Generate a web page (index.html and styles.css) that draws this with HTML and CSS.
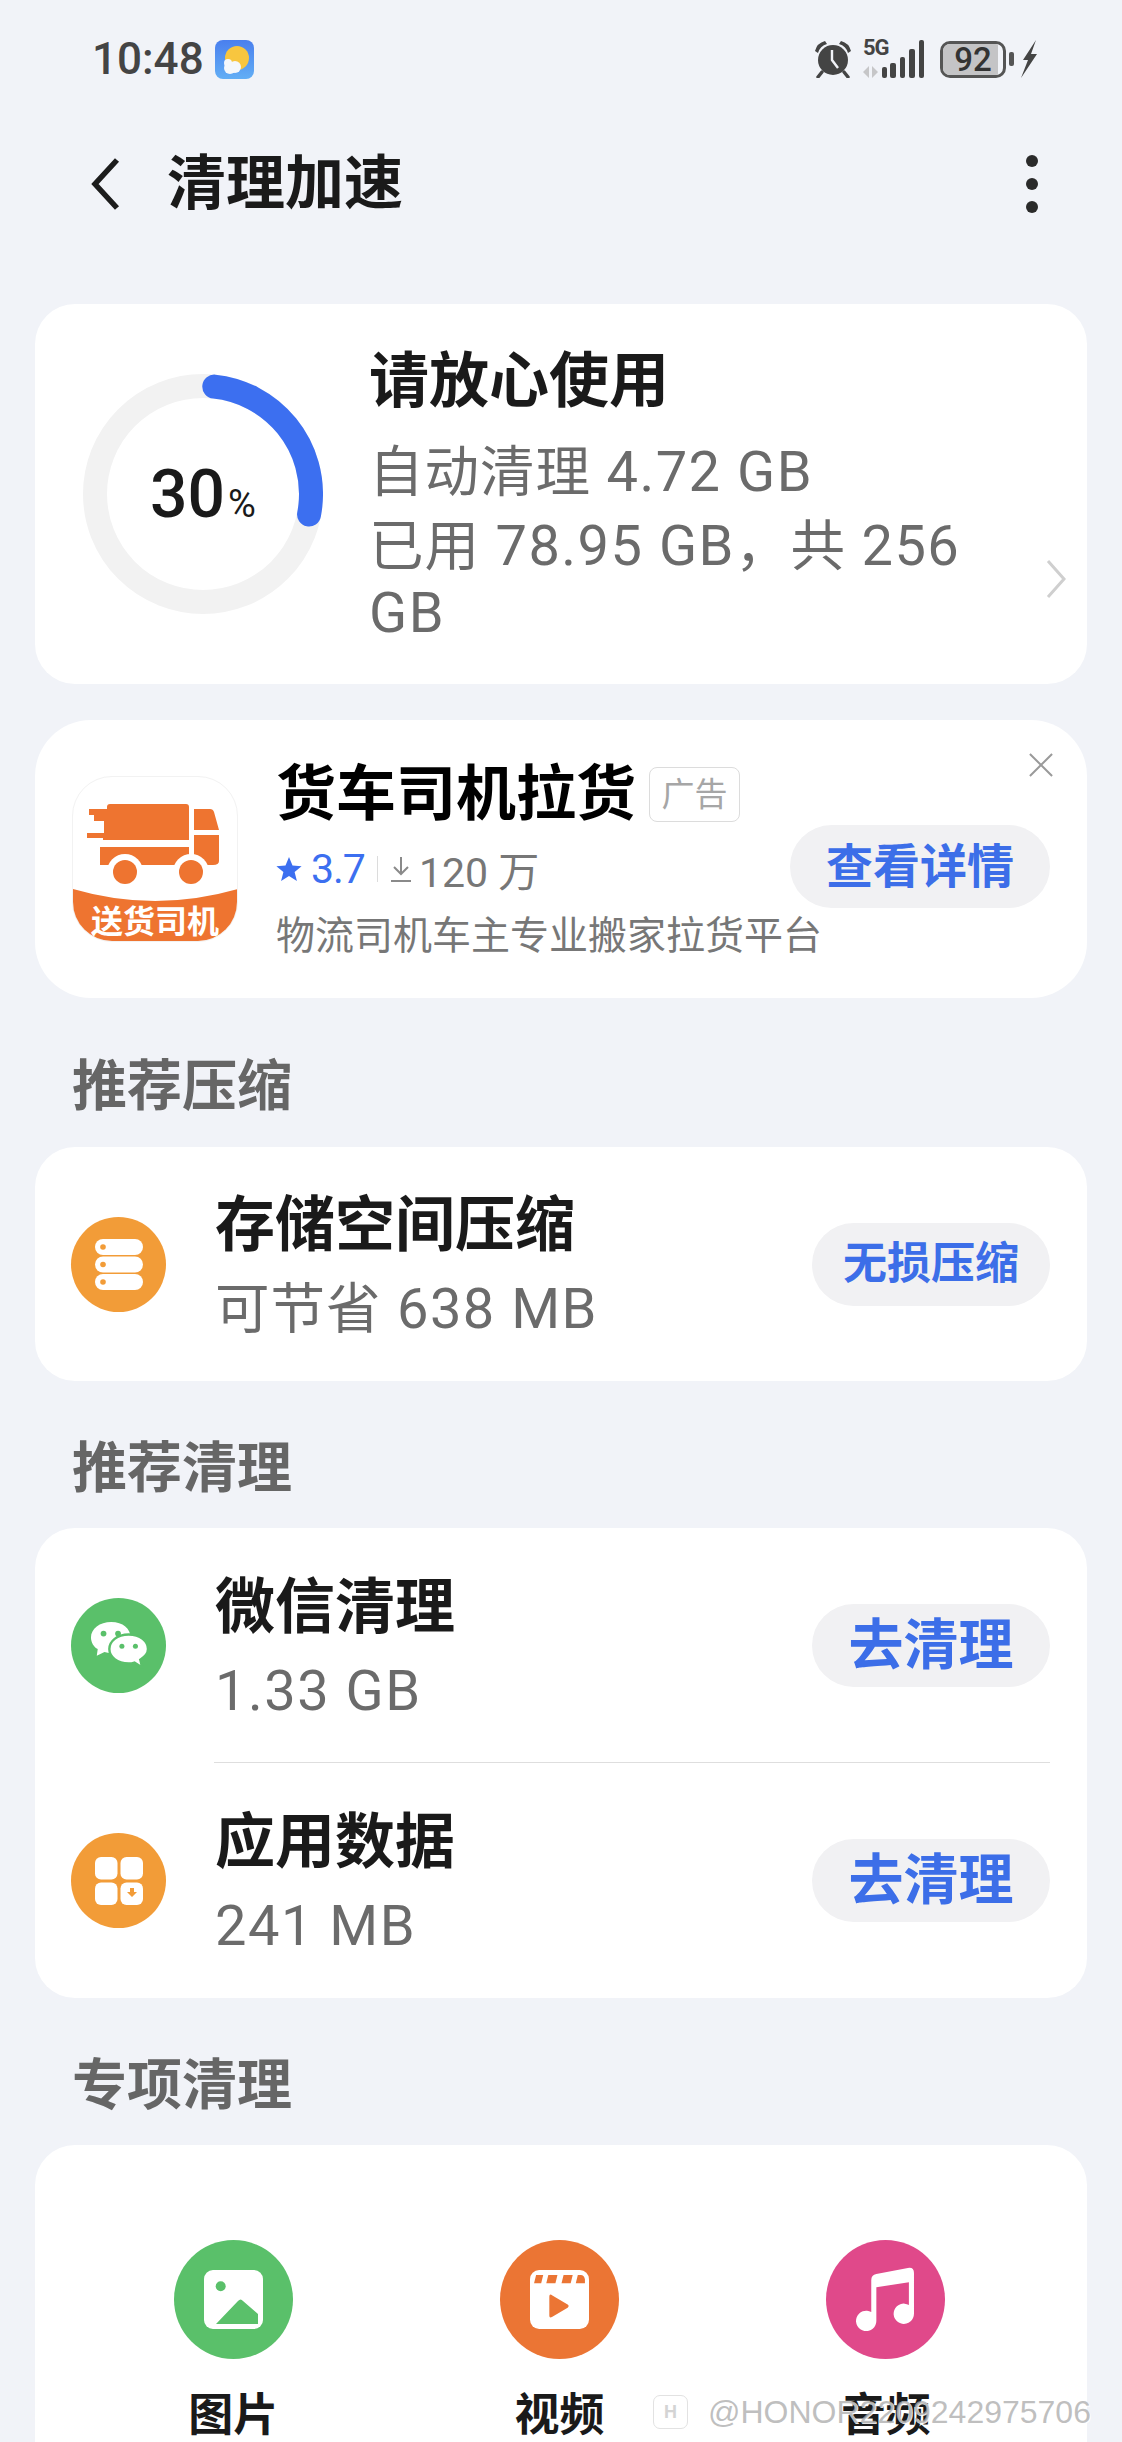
FILE: index.html
```html
<!DOCTYPE html>
<html lang="zh-CN">
<head>
  <meta charset="UTF-8" />
  <meta name="viewport" content="width=device-width, initial-scale=1.0" />
  <title>清理加速</title>
  <link rel="stylesheet" href="styles.css">
</head>
<body>
  <div id="screen">
    <div class="status">
      <div class="status-left">
        <span class="time">10:48</span>
        <svg class="weather" viewBox="0 0 39 39">
          <defs>
            <linearGradient id="sky" x1="0" y1="0" x2="0" y2="1">
              <stop offset="0" stop-color="#4a7fee"/>
              <stop offset="1" stop-color="#62aef5"/>
            </linearGradient>
          </defs>
          <rect width="39" height="39" rx="8" fill="url(#sky)"/>
          <circle cx="22" cy="18" r="12" fill="#f8c63f"/>
          <circle cx="15" cy="28" r="6" fill="#f4f7fb"/>
          <circle cx="20" cy="27" r="6" fill="#f4f7fb"/>
          <circle cx="13" cy="23" r="4" fill="#f4f7fb"/>
        </svg>
      </div>
      <div class="status-right">
        <svg class="st-alarm" viewBox="0 0 38 38">
          <path d="M1 11 Q3 3 11 1 L13 4 Q6 6 4 13Z M37 11 Q35 3 27 1 L25 4 Q32 6 34 13Z" fill="#444"/>
          <circle cx="19" cy="20" r="15" fill="#444"/>
          <path d="M18 10 V20 L24 28" stroke="#f1f3f8" stroke-width="2.4" fill="none"/>
          <path d="M8 32 L4 37 M30 32 L34 37" stroke="#444" stroke-width="3.4" stroke-linecap="round"/>
        </svg>
        <div class="st-net">
          <span class="st-5g">5G</span>
          <svg class="st-bars" viewBox="0 0 62 38">
            <path d="M6 26 L0 32 L6 38Z M9 26 V38 L15 32Z" fill="#c6c6c8"/>
            <rect x="19" y="27" width="5" height="11" rx="2" fill="#444"/>
            <rect x="27" y="23" width="6" height="15" rx="2" fill="#444"/>
            <rect x="37" y="17" width="5" height="21" rx="2" fill="#444"/>
            <rect x="46" y="9" width="6" height="29" rx="2" fill="#444"/>
            <rect x="56" y="0" width="5" height="38" rx="2" fill="#444"/>
          </svg>
        </div>
        <div class="st-battery">
          <div class="st-fill"></div>
          <span class="st-level">92</span>
        </div>
        <span class="st-nub"></span>
        <svg class="st-bolt" viewBox="0 0 16 38">
          <path d="M15 0 L2 20 L7 20 L0 38 L16 14 L10 14Z" fill="#444"/>
        </svg>
      </div>
    </div>

    <div class="topbar">
      <svg class="back" viewBox="0 0 30 54">
        <path d="M26 3 L4 27 L26 51" fill="none" stroke="#1c1c1c" stroke-width="5.5"/>
      </svg>
      <h1>清理加速</h1>
      <div class="more"><i></i><i></i><i></i></div>
    </div>

    <div class="card summary">
      <div class="ring">
        <svg viewBox="0 0 240 240">
          <circle cx="120" cy="120" r="108" fill="none" stroke="#f2f2f2" stroke-width="24"/>
          <circle class="ring-val" cx="120" cy="120" r="108" fill="none" pathLength="360" stroke-dasharray="95 360" stroke-linecap="round" stroke="#3c6ff0" stroke-width="24"/>
        </svg>
        <div class="ring-text">30<small>%</small></div>
      </div>
      <div class="summary-text">
        <div class="summary-title">请放心使用</div>
        <div class="summary-line"><span class="cn">自动清理</span> 4.72 GB</div>
        <div class="summary-line"><span class="cn">已用</span> 78.95 GB<span class="cn">，共</span> 256<br>GB</div>
      </div>
      <svg class="chevron" viewBox="0 0 20 38">
        <path d="M2 1 L18 19 L2 37" fill="none" stroke="#cfcfcf" stroke-width="3"/>
      </svg>
    </div>

    <div class="card ad">
      <svg class="ad-close" viewBox="0 0 26 26">
        <path d="M1 1 L25 25 M25 1 L1 25" stroke="#9a9a9a" stroke-width="2.2"/>
      </svg>
      <div class="app-icon">
        <svg viewBox="0 0 165 165">
          <path d="M0 112 Q82 136 165 112 V165 H0Z" fill="#ee7430"/>
          <path d="M34 30 Q34 27 37 27 H113 Q116 27 116 30 V63 H30 V61 H14 V56 H31 V44 H21 V38 H34 V38 H16 V32 H34Z" fill="#ee7430"/>
          <path d="M27 70 H116 V88 H27 Q27 80 27 70Z" fill="#ee7430"/>
          <path d="M121 32 H137 Q140 32 141 35 L146 53 H121Z M121 58 H146 V84 Q146 88 140 88 H121Z" fill="#ee7430"/>
          <circle cx="52" cy="95" r="18" fill="#fff"/>
          <circle cx="118" cy="95" r="18" fill="#fff"/>
          <circle cx="52" cy="95" r="12" fill="#ee7430"/>
          <circle cx="118" cy="95" r="12" fill="#ee7430"/>
        </svg>
        <div class="app-band">送货司机</div>
      </div>
      <div class="ad-body">
        <div class="ad-title">
          <span>货车司机拉货</span>
          <span class="ad-tag">广告</span>
        </div>
        <div class="ad-meta">
          <svg class="star" viewBox="0 0 26 26">
            <path d="M13 1 L16.5 9.6 L25.6 10.2 L18.6 16 L20.9 25 L13 20.1 L5.1 25 L7.4 16 L.4 10.2 L9.5 9.6Z" fill="#3c6ff0"/>
          </svg>
          <span class="rate">3.7</span>
          <span class="meta-sep"></span>
          <svg class="dl" viewBox="0 0 22 26">
            <path d="M11 1 V18 M4 11 L11 18 L18 11 M1 25 H21" fill="none" stroke="#8a8a8a" stroke-width="2"/>
          </svg>
          <span class="dl-count">120 万</span>
        </div>
        <div class="ad-desc">物流司机车主专业搬家拉货平台</div>
      </div>
      <div class="pill pill-ad">查看详情</div>
    </div>

    <h2 class="section section-first">推荐压缩</h2>
    <div class="card single">
      <div class="row">
        <div class="row-icon orange">
          <svg viewBox="0 0 48 51">
            <rect x="0" y="0" width="48" height="16" rx="8" fill="#fff"/>
            <rect x="0" y="17.5" width="48" height="16" rx="8" fill="#fff"/>
            <rect x="0" y="35" width="48" height="16" rx="8" fill="#fff"/>
            <circle cx="8" cy="8" r="2.8" fill="#f29c38"/>
            <circle cx="8" cy="25.5" r="2.8" fill="#f29c38"/>
            <circle cx="8" cy="43" r="2.8" fill="#f29c38"/>
          </svg>
        </div>
        <div class="row-text">
          <div class="row-title">存储空间压缩</div>
          <div class="row-sub"><span class="cn">可节省</span> 638 MB</div>
        </div>
        <div class="pill pill-small">无损压缩</div>
      </div>
    </div>

    <h2 class="section">推荐清理</h2>
    <div class="card">
      <div class="row">
        <div class="row-icon green">
          <svg viewBox="0 0 60 48">
            <path d="M22 0 C10 0 1 7 1 16 C1 21 4 26 8 28 L7 35 L15 31 Q18 32 22 32 C34 32 42 25 42 16 C42 7 34 0 22 0Z" fill="#fff"/>
            <circle cx="14" cy="12" r="3" fill="#5ac06a"/>
            <circle cx="29" cy="12" r="3" fill="#5ac06a"/>
            <path d="M40 13 C28 13 20 20 20 28 C20 36 28 43 40 43 Q43 43 46 42 L54 47 L52 39 C57 36 60 32 60 28 C60 20 52 13 40 13Z" fill="#fff" stroke="#5ac06a" stroke-width="2.5"/>
            <circle cx="33" cy="25" r="2.6" fill="#5ac06a"/>
            <circle cx="47" cy="25" r="2.6" fill="#5ac06a"/>
          </svg>
        </div>
        <div class="row-text">
          <div class="row-title">微信清理</div>
          <div class="row-sub">1.33 GB</div>
        </div>
        <div class="pill">去清理</div>
      </div>
      <div class="row-line"></div>
      <div class="row">
        <div class="row-icon orange">
          <svg viewBox="0 0 48 48">
            <rect x="0" y="0" width="22.5" height="22.5" rx="6" fill="#fff"/>
            <rect x="25.5" y="0" width="22.5" height="22.5" rx="6" fill="#fff"/>
            <rect x="0" y="25.5" width="22.5" height="22.5" rx="6" fill="#fff"/>
            <rect x="25.5" y="25.5" width="22.5" height="22.5" rx="6" fill="#fff"/>
            <path d="M35 31 H39 V35 H42 L37 40 L32 35 H35Z" fill="#f29c38"/>
          </svg>
        </div>
        <div class="row-text">
          <div class="row-title">应用数据</div>
          <div class="row-sub">241 MB</div>
        </div>
        <div class="pill">去清理</div>
      </div>
    </div>

    <h2 class="section">专项清理</h2>
    <div class="card special">
      <div class="tile">
        <div class="tile-icon green">
          <svg viewBox="0 0 59 59">
            <rect width="59" height="59" rx="9" fill="#fff"/>
            <circle cx="16.7" cy="16.3" r="5" fill="#5ac06a"/>
            <path d="M12 54 L34 31 Q36.7 28 39 31 L54 44 V54Z" fill="#5ac06a"/>
          </svg>
        </div>
        <div class="tile-label">图片</div>
      </div>
      <div class="tile">
        <div class="tile-icon video">
          <svg viewBox="0 0 58 58">
            <rect width="58" height="58" rx="9" fill="#fff"/>
            <path d="M6 5 H13 L11 13 H4Z M18 5 H27 L25 13 H16Z M33 5 H42 L40 13 H31Z M47 5 H50 Q53 5 54 9 V13 H45Z" fill="#eb7534"/>
            <path d="M19 26 Q19 23 22 25 L37 34 Q39 35.500 37 37 L22 46 Q19 48 19 45Z" fill="#eb7534"/>
          </svg>
        </div>
        <div class="tile-label">视频</div>
      </div>
      <div class="tile">
        <div class="tile-icon pink">
          <svg viewBox="0 0 58 64">
            <path d="M15 13 Q15 8 20 7 L51 1 Q57 0 57 6 V46 A10 10 0 1 1 52 37.340 V15 L20 20 V53 A10 10 0 1 1 15 44.340Z" fill="#fff"/>
          </svg>
        </div>
        <div class="tile-label">音频</div>
      </div>
    </div>

    <div class="watermark">
      <span class="wm-logo">H</span>
      <span class="wm-text">@HONOR2209242975706</span>
    </div>
  </div>
</body>
</html>
```

FILE: styles.css
```css
* {
  box-sizing: border-box;
}
html, body {
  margin: 0;
  height: 2442px;
  overflow: hidden;
}
body {
  background-color: #f1f3f8;
  color: #1a1a1a;
  font-family: "Roboto", "Noto Sans CJK SC", sans-serif;
}
#screen {
  position: relative;
  height: 2442px;
  padding: 39px 35px 0;
  overflow: hidden;
}
.cn {
  font-size: 54.5px;
  letter-spacing: 1px;
}

/* status bar */
.status {
  height: 40px;
  padding: 0 50px 0 57px;
  display: flex;
  align-items: center;
  justify-content: space-between;
}
.status-left {
  display: flex;
  align-items: center;
  gap: 11px;
}
.time {
  font-size: 44px;
  font-weight: 500;
  color: #444;
}
.weather {
  width: 39px;
  height: 39px;
}
.status-right {
  display: flex;
  align-items: center;
}
.st-alarm {
  width: 38px;
  height: 38px;
}
.st-net {
  position: relative;
  width: 62px;
  height: 38px;
  margin-left: 11px;
}
.st-5g {
  position: absolute;
  left: 0;
  top: -5px;
  font-size: 22px;
  line-height: 26px;
  font-weight: 700;
  letter-spacing: -1px;
  color: #444;
}
.st-bars {
  width: 62px;
  height: 38px;
  display: block;
}
.st-battery {
  position: relative;
  width: 66px;
  height: 37px;
  margin-left: 15px;
  border: 3px solid #555;
  border-radius: 10px;
  overflow: hidden;
  display: flex;
  align-items: center;
  justify-content: center;
}
.st-fill {
  position: absolute;
  left: 0;
  top: 0;
  bottom: 0;
  width: 92%;
  background-color: #c4c4c6;
}
.st-level {
  position: relative;
  font-size: 33px;
  font-weight: 500;
  color: #333;
  line-height: 1;
}
.st-nub {
  width: 5px;
  height: 14px;
  margin-left: 3px;
  background-color: #555;
  border-radius: 2px;
}
.st-bolt {
  width: 16px;
  height: 38px;
  margin-left: 7px;
}

/* title bar */
.topbar {
  display: flex;
  align-items: center;
  height: 80px;
  margin-top: 65px;
  padding: 0 49px 0 56px;
}
.back {
  width: 30px;
  height: 54px;
  margin-right: 46px;
}
.topbar h1 {
  margin: 0;
  flex: 1;
  font-size: 59px;
  line-height: 80px;
  font-weight: 700;
  color: #1a1a1a;
}
.more {
  display: flex;
  flex-direction: column;
  gap: 11px;
}
.more i {
  display: block;
  width: 12px;
  height: 12px;
  border-radius: 50%;
  background-color: #2a2a2a;
}

/* cards */
.card {
  background-color: #fff;
  border-radius: 40px;
}
.summary {
  position: relative;
  height: 380px;
  margin-top: 80px;
  padding: 70px 0 0 48px;
  display: flex;
}
.ring {
  position: relative;
  width: 240px;
  height: 240px;
  flex: none;
}
.ring svg {
  display: block;
  width: 240px;
  height: 240px;
}
.ring-val {
  transform: rotate(-84deg);
  transform-origin: 120px 120px;
}
.ring-text {
  position: absolute;
  inset: 0;
  display: flex;
  align-items: baseline;
  justify-content: center;
  padding-top: 81px;
  font-size: 66px;
  line-height: 80px;
  font-weight: 500;
}
.ring-text small {
  font-size: 38px;
  font-weight: 400;
  margin-left: 3px;
}
.summary-text {
  margin: -34px 0 0 46px;
  width: 640px;
}
.summary-title {
  font-size: 60px;
  line-height: 84px;
  font-weight: 700;
  margin-bottom: 15px;
}
.summary-line {
  font-size: 56px;
  line-height: 67px;
  letter-spacing: 1.5px;
  color: #6b6b6b;
  margin-bottom: 7px;
}
.chevron {
  position: absolute;
  right: 21px;
  top: 256px;
  width: 20px;
  height: 38px;
}

.ad {
  position: relative;
  height: 278px;
  margin-top: 36px;
  border-radius: 56px;
  padding: 0 37px;
  display: flex;
  align-items: center;
}
.ad-close {
  position: absolute;
  right: 34px;
  top: 33px;
  width: 24px;
  height: 24px;
}
.app-icon {
  position: relative;
  width: 166px;
  height: 166px;
  flex: none;
  border: 1px solid #f2f2f2;
  border-radius: 40px;
  overflow: hidden;
  margin-top: -1px;
}
.app-icon svg {
  display: block;
  width: 165px;
  height: 165px;
}
.app-band {
  position: absolute;
  left: 0;
  right: 0;
  bottom: 3px;
  color: #fff;
  font-size: 32px;
  line-height: 32px;
  font-weight: 700;
  text-align: center;
}
.ad-body {
  flex: 1;
  margin-left: 38px;
}
.ad-title {
  display: flex;
  align-items: center;
  gap: 13px;
  font-size: 60px;
  line-height: 80px;
  font-weight: 700;
  color: #000;
}
.ad-tag {
  width: 91px;
  height: 55px;
  border: 1px solid #dcdcdc;
  border-radius: 8px;
  font-size: 33px;
  line-height: 53px;
  font-weight: 400;
  text-align: center;
  color: #a6a6a6;
}
.ad-meta {
  display: flex;
  align-items: center;
  height: 56px;
  margin-top: 6px;
  font-size: 41px;
}
.star {
  width: 26px;
  height: 26px;
  margin-right: 9px;
}
.rate {
  color: #3c6ff0;
  letter-spacing: -1px;
}
.meta-sep {
  width: 1px;
  height: 26px;
  margin: 0 12px;
  background-color: #dcdcdc;
}
.dl {
  width: 22px;
  height: 26px;
  margin-right: 7px;
}
.dl-count {
  color: #777;
}
.ad-desc {
  margin-top: 11px;
  font-size: 39px;
  line-height: 56px;
  color: #777;
}
.pill {
  flex: none;
  width: 238px;
  height: 83px;
  border-radius: 42px;
  background-color: #f1f1f3;
  color: #3c6ee8;
  font-size: 55px;
  line-height: 83px;
  font-weight: 700;
  text-align: center;
}
.pill-small {
  font-size: 44px;
}
.pill-ad {
  position: absolute;
  right: 37px;
  top: 105px;
  width: 260px;
  font-size: 47px;
}

/* list rows */
.section {
  margin: 0;
  height: 147px;
  padding: 0 37px;
  font-size: 55px;
  line-height: 174px;
  font-weight: 700;
  color: #666;
}
.section-first {
  height: 149px;
  line-height: 176px;
}
.row {
  height: 235px;
  padding: 0 37px 0 36px;
  display: flex;
  align-items: center;
}
.single .row {
  height: 234px;
}
.row-icon {
  width: 95px;
  height: 95px;
  flex: none;
  border-radius: 50%;
  display: flex;
  align-items: center;
  justify-content: center;
}
.row-icon svg {
  width: 48px;
}
.row-icon.orange {
  background-color: #f29c38;
}
.row-icon.green {
  background-color: #5ac06a;
}
.row-icon.green svg {
  width: 58px;
}
.row-text {
  flex: 1;
  margin-left: 49px;
  padding-top: 6px;
}
.row-title {
  font-size: 60px;
  line-height: 84px;
  font-weight: 700;
}
.row-sub {
  font-size: 56px;
  line-height: 82px;
  letter-spacing: 1.5px;
  color: #6b6b6b;
}
.row-line {
  height: 1px;
  margin: -1px 37px 0 179px;
  background-color: #dedede;
}

/* special tiles */
.special {
  padding: 95px 38px 0 35px;
  display: grid;
  grid-template-columns: repeat(3, 1fr);
  height: 400px;
}
.tile {
  display: flex;
  flex-direction: column;
  align-items: center;
}
.tile-icon {
  width: 119px;
  height: 119px;
  border-radius: 50%;
  display: flex;
  align-items: center;
  justify-content: center;
}
.tile-icon svg {
  width: 59px;
}
.tile-icon.green {
  background-color: #5ac06a;
}
.tile-icon.video {
  background-color: #eb7534;
}
.tile-icon.pink {
  background-color: #e0498a;
}
.tile-label {
  margin-top: 33px;
  font-size: 45px;
  line-height: 48px;
  font-weight: 700;
}

/* watermark over the corner */
.watermark {
  position: absolute;
  left: 653px;
  top: 2395px;
  display: flex;
  align-items: center;
  gap: 20px;
}
.wm-logo {
  width: 35px;
  height: 34px;
  border: 1px solid #e2e2e2;
  border-radius: 7px;
  background-color: rgba(255, 255, 255, 0.7);
  color: #d4d4d4;
  font-family: "Liberation Sans", sans-serif;
  font-size: 18px;
  font-weight: 700;
  line-height: 32px;
  text-align: center;
}
.wm-text {
  font-family: "Liberation Sans", sans-serif;
  font-size: 32px;
  line-height: 34px;
  color: rgba(170, 170, 170, 0.75);
  text-shadow: 1px 1px 0 rgba(255, 255, 255, 0.9);
  white-space: nowrap;
}
```
